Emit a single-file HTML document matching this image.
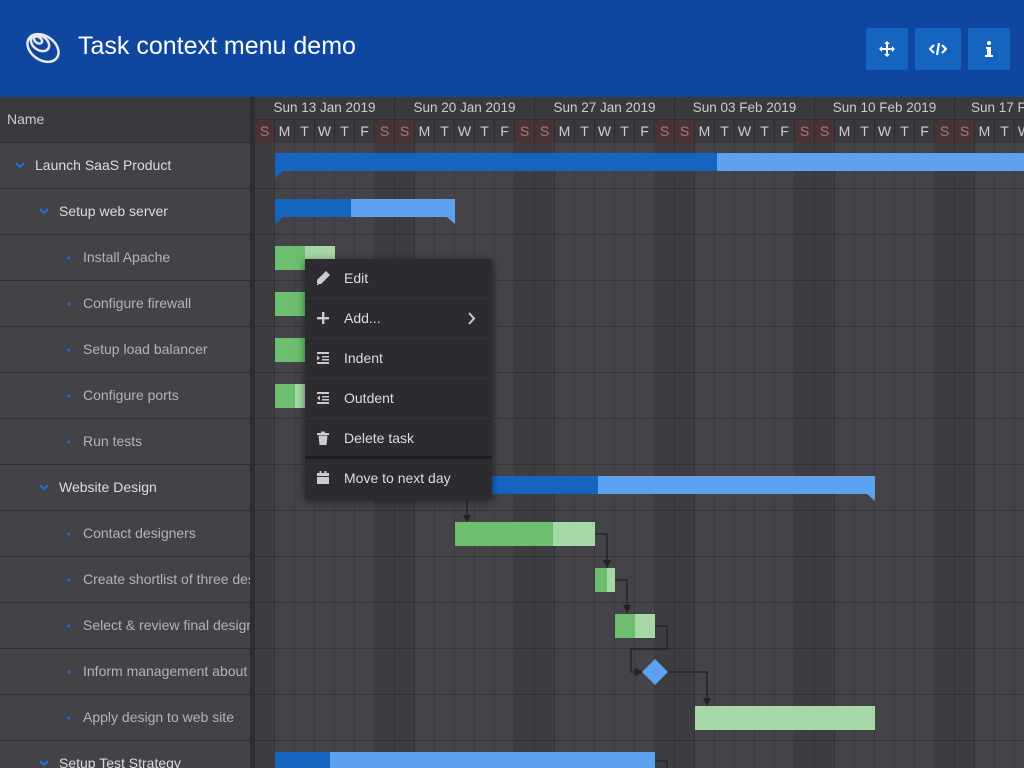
<!DOCTYPE html>
<html style="overflow:hidden;width:1024px;height:768px"><head><meta charset="utf-8"><style>
*{box-sizing:border-box;margin:0;padding:0}
body{width:1024px;height:768px;overflow:hidden;background:#3f3e43;font-family:"Liberation Sans","DejaVu Sans",sans-serif;position:relative}
.a{position:absolute}
#hdr{left:0;top:0;width:1024px;height:97px;background:#0e46a0}
#title{left:78px;top:32px;color:#fff;font-size:25px}
.btn{top:28px;height:42px;background:#1565c0;border-radius:2px;display:flex;align-items:center;justify-content:center}
#left{left:0;top:97px;width:250px;height:671px;background:#434247}
#split{left:250px;top:97px;width:5px;height:671px;background:#2e2e32}
.row{left:0;width:250px;height:46px;border-bottom:1px solid #2f2f33;font-size:14px;line-height:45px;white-space:nowrap;overflow:hidden}
#grid{left:255px;top:143px;width:769px;height:625px;
background:
repeating-linear-gradient(to bottom,transparent 0 45px,#36363a 45px 46px),
repeating-linear-gradient(to right,transparent 0 19px,#3b3b3f 19px 20px),
#444348}
.we{top:143px;width:40px;height:625px;background:rgba(0,0,0,.1)}
.dh{top:97px;height:23px;width:140px;border-right:1px solid #2c2c30;border-bottom:1px solid #2c2c30;color:#ccc;font-size:13.5px;text-align:center;line-height:22px}
.d{top:120px;width:20px;height:23px;border-right:1px solid #2c2c30;text-align:center;color:#ccc;font-size:14px;line-height:22px;background:#3a393e}
.d.s{background:#4a3335;color:#a07c7e}
.bar{height:24px}
.g1{background:#6dbf6f}.g2{background:#a5d8a6}.b1{background:#1565c0}.b2{background:#5ea1ee}
#menu{left:305px;top:259px;width:187px;height:240px;background:#2b2b30;box-shadow:0 2px 8px rgba(0,0,0,.5)}
.mi{left:0;width:187px;height:40px;color:#ddd;font-size:14px;line-height:38px;padding-left:39px;border-bottom:1px dotted #3c3c41}
.ic{left:10px;top:11px;width:16px;height:16px}
</style></head><body>
<div id="hdr" class="a"></div>
<svg class="a" style="left:24px;top:28px" width="38" height="38" viewBox="0 0 38 38"><g fill="none" stroke="#e8e8ee" stroke-width="2.5"><ellipse cx="19" cy="20" rx="17" ry="12" transform="rotate(35 19 20)"/><ellipse cx="16" cy="15" rx="10" ry="7" transform="rotate(35 16 15)"/><ellipse cx="14" cy="12" rx="4.5" ry="3" transform="rotate(35 14 12)"/></g></svg>
<div id="title" class="a">Task context menu demo</div>
<div class="a btn" style="left:866px;width:42px"><svg width="16" height="16" viewBox="0 0 16 16" fill="#fff"><path d="M8 0l3 3H9v4h4V5l3 3-3 3V9H9v4h2l-3 3-3-3h2V9H3v2L0 8l3-3v2h4V3H5z"/></svg></div>
<div class="a btn" style="left:915px;width:46px"><svg width="18" height="14" viewBox="0 0 18 14" fill="none" stroke="#fff" stroke-width="2.2"><path d="M5 3L1 7l4 4M13 3l4 4-4 4M10 1L8 13"/></svg></div>
<div class="a btn" style="left:968px;width:42px"><svg width="8" height="16" viewBox="0 0 8 16" fill="#fff"><circle cx="4" cy="2" r="2"/><path d="M1 6h5v8h2v2H0v-2h2V8H1z"/></svg></div>

<div id="left" class="a">
<div class="a" style="left:0;top:0;width:250px;height:46px;background:#3a393e;border-bottom:1px solid #2c2c30;color:#ccc;font-size:14px;line-height:44px;padding-left:7px">Name</div>
</div>
<div id="split" class="a"></div>
<div class="a row" style="top:143px;color:#ddd;padding-left:35px">Launch SaaS Product</div>
<div class="a row" style="top:189px;color:#ddd;padding-left:59px">Setup web server</div>
<div class="a row" style="top:235px;color:#b3b3b8;padding-left:83px">Install Apache</div>
<div class="a row" style="top:281px;color:#b3b3b8;padding-left:83px">Configure firewall</div>
<div class="a row" style="top:327px;color:#b3b3b8;padding-left:83px">Setup load balancer</div>
<div class="a row" style="top:373px;color:#b3b3b8;padding-left:83px">Configure ports</div>
<div class="a row" style="top:419px;color:#b3b3b8;padding-left:83px">Run tests</div>
<div class="a row" style="top:465px;color:#ddd;padding-left:59px">Website Design</div>
<div class="a row" style="top:511px;color:#b3b3b8;padding-left:83px">Contact designers</div>
<div class="a row" style="top:557px;color:#b3b3b8;padding-left:83px">Create shortlist of three designers</div>
<div class="a row" style="top:603px;color:#b3b3b8;padding-left:83px">Select &amp; review final design</div>
<div class="a row" style="top:649px;color:#b3b3b8;padding-left:83px">Inform management about decision</div>
<div class="a row" style="top:695px;color:#b3b3b8;padding-left:83px">Apply design to web site</div>
<div class="a row" style="top:741px;color:#ddd;padding-left:59px">Setup Test Strategy</div>
<svg class="a" style="left:0;top:143px" width="80" height="625">
<g fill="none" stroke="#1e6fd0" stroke-width="2.2"><path d="M16 20l4 4 4-4M40 66l4 4 4-4M40 342l4 4 4-4M40 618l4 4 4-4"/></g>
<g fill="#1e6fd0"><circle cx="69" cy="115" r="1.6"/><circle cx="69" cy="161" r="1.6"/><circle cx="69" cy="207" r="1.6"/><circle cx="69" cy="253" r="1.6"/><circle cx="69" cy="299" r="1.6"/><circle cx="69" cy="391" r="1.6"/><circle cx="69" cy="437" r="1.6"/><circle cx="69" cy="483" r="1.6"/><circle cx="69" cy="529" r="1.6"/><circle cx="69" cy="575" r="1.6"/></g></svg>

<div id="grid" class="a"></div>
<div class="a we" style="left:255px;width:20px"></div>
<div class="a we" style="left:375px"></div><div class="a we" style="left:515px"></div><div class="a we" style="left:655px"></div><div class="a we" style="left:795px"></div><div class="a we" style="left:935px"></div>
<div class="a" style="left:255px;top:97px;width:769px;height:46px;background:#3a393e"></div>
<div class="a dh" style="left:255px">Sun 13 Jan 2019</div>
<div class="a dh" style="left:395px">Sun 20 Jan 2019</div>
<div class="a dh" style="left:535px">Sun 27 Jan 2019</div>
<div class="a dh" style="left:675px">Sun 03 Feb 2019</div>
<div class="a dh" style="left:815px">Sun 10 Feb 2019</div>
<div class="a dh" style="left:955px;text-align:left;padding-left:16px">Sun 17 Feb 2019</div>
<div id="days"></div>

<div class="a b1" style="left:275px;top:153px;width:442px;height:18px"></div>
<div class="a b2" style="left:717px;top:153px;width:307px;height:18px"></div>
<div class="a b1" style="left:275px;top:199px;width:76px;height:18px"></div>
<div class="a b2" style="left:351px;top:199px;width:104px;height:18px"></div>
<div class="a b1" style="left:455px;top:476px;width:143px;height:18px"></div>
<div class="a b2" style="left:598px;top:476px;width:277px;height:18px"></div>
<div class="a b1" style="left:275px;top:752px;width:55px;height:18px"></div>
<div class="a b2" style="left:330px;top:752px;width:325px;height:18px"></div>
<svg class="a" style="left:0;top:0" width="1024" height="768">
<g fill="#1565c0"><path d="M275 171h8l-8 7zM275 217h8l-8 7z"/></g>
<g fill="#5ea1ee"><path d="M455 217h-8l8 7zM875 494h-8l8 7z"/></g>
<g fill="none" stroke="#222" stroke-width="1.3"><path d="M595 534h12v34M615 580h12v33M655 626h12v23h-36v23h8M667 672h40v28M467 500v20M655 761h12v7"/></g>
<g fill="#222"><path d="M603 560h8l-4 8zM623 605h8l-4 8zM635 668v8l8-4zM703 698h8l-4 8zM463 515h8l-4 7z"/></g>
<path d="M655 659l13 13-13 13-13-13z" fill="#5ea1ee"/>
</svg>
<div class="a bar g1" style="left:275px;top:246px;width:30px"></div><div class="a bar g2" style="left:305px;top:246px;width:30px"></div>
<div class="a bar g1" style="left:275px;top:292px;width:30px"></div>
<div class="a bar g1" style="left:275px;top:338px;width:30px"></div>
<div class="a bar g1" style="left:275px;top:384px;width:20px"></div><div class="a bar g2" style="left:295px;top:384px;width:10px"></div>
<div class="a bar g1" style="left:455px;top:522px;width:98px"></div><div class="a bar g2" style="left:553px;top:522px;width:42px"></div>
<div class="a bar g1" style="left:595px;top:568px;width:12px"></div><div class="a bar g2" style="left:607px;top:568px;width:8px"></div>
<div class="a bar g1" style="left:615px;top:614px;width:20px"></div><div class="a bar g2" style="left:635px;top:614px;width:20px"></div>
<div class="a bar g2" style="left:695px;top:706px;width:180px"></div>

<div id="menu" class="a">
<div class="a mi" style="top:0">Edit<svg class="a ic" viewBox="0 0 16 16" fill="#ccc"><path d="M11 1l4 4-9 9H2v-4zM2 15h2l-2-2z"/></svg></div>
<div class="a mi" style="top:40px">Add...<svg class="a ic" viewBox="0 0 16 16" fill="#ccc"><path d="M7 2h2.4v5H14v2.4H9.4V14H7V9.4H2V7h5z"/></svg><svg class="a" style="left:163px;top:13px" width="8" height="13" viewBox="0 0 8 13" fill="none" stroke="#ccc" stroke-width="2"><path d="M1 1l5 5.5L1 12"/></svg></div>
<div class="a mi" style="top:80px">Indent<svg class="a ic" viewBox="0 0 16 16" fill="#ccc"><path d="M2 2h12v2H2zM7 6h7v1.5H7zM7 9h7v1.5H7zM2 12h12v2H2zM2 5.5l3 2.5-3 2.5z"/></svg></div>
<div class="a mi" style="top:120px">Outdent<svg class="a ic" viewBox="0 0 16 16" fill="#ccc"><path d="M2 2h12v2H2zM7 6h7v1.5H7zM7 9h7v1.5H7zM2 12h12v2H2zM5 5.5L2 8l3 2.5z"/></svg></div>
<div class="a mi" style="top:160px;border-bottom:3px solid #1e1e22">Delete task<svg class="a ic" viewBox="0 0 16 16" fill="#ccc"><path d="M2 3h12v2H2zM6 1.5h4V3H6zM3.5 5.5h9l-1 9.5h-7z"/></svg></div>
<div class="a mi" style="top:200px;border:0">Move to next day<svg class="a ic" viewBox="0 0 16 16" fill="#ccc"><path d="M2 3h12v11H2zM4.5 1h2v3h-2zM9.5 1h2v3h-2z"/><path d="M2 6h12v1H2z" fill="#2b2b30"/></svg></div>
</div>
<script>
var L="SMTWTFS",h="";for(var i=0;i<39;i++){var c=L[i%7],s=(i%7==0||i%7==6);h+='<div class="a d'+(s?' s':'')+'" style="left:'+(255+i*20)+'px">'+c+'</div>';}
document.getElementById('days').innerHTML=h;
</script>
</body></html>
